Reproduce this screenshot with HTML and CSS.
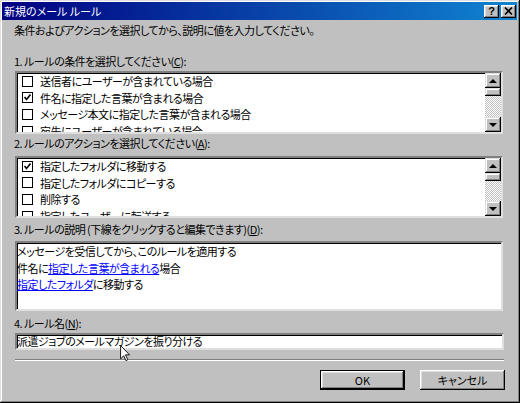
FILE: index.html
```html
<!DOCTYPE html>
<html lang="ja">
<head>
    <meta charset="UTF-8">
    <title>新規のメール ルール</title>
    <link rel="stylesheet" href="styles.css">
</head>
<body>
<div class="window">
    <div class="titlebar">
        <span class="title">新規のメール ルール</span>
        <div class="title-buttons">
            <span class="tbtn">?</span>
            <span class="tbtn">
                <svg width="9" height="8" viewBox="0 0 9 8"><path d="M1 0.5 L8 7.5 M8 0.5 L1 7.5" stroke="#000" stroke-width="1.6"/></svg>
            </span>
        </div>
    </div>

    <div class="content">
        <div class="intro">条件およびアクションを選択してから、説明に値を入力してください。</div>

        <div class="label label-1">1. ルールの条件を選択してください(<u>C</u>):</div>
        <div class="listbox lb-1">
            <ul class="items">
                <li><span class="check"></span>送信者にユーザーが含まれている場合</li>
                <li><span class="check checked"><svg width="9" height="9" viewBox="0 0 9 9"><path d="M1.5 4 L3.5 6.5 L7.5 1.5" fill="none" stroke="#000" stroke-width="1.6"/></svg></span>件名に指定した言葉が含まれる場合</li>
                <li><span class="check"></span>メッセージ本文に指定した言葉が含まれる場合</li>
                <li><span class="check"></span>宛先にユーザーが含まれている場合</li>
            </ul>
            <div class="scrollbar">
                <div class="sb-btn"><span class="arrow-up"></span></div>
                <div class="sb-thumb"></div>
                <div class="sb-track"></div>
                <div class="sb-btn"><span class="arrow-down"></span></div>
            </div>
        </div>

        <div class="label label-2">2. ルールのアクションを選択してください(<u>A</u>):</div>
        <div class="listbox lb-2">
            <ul class="items">
                <li><span class="check checked"><svg width="9" height="9" viewBox="0 0 9 9"><path d="M1.5 4 L3.5 6.5 L7.5 1.5" fill="none" stroke="#000" stroke-width="1.6"/></svg></span>指定したフォルダに移動する</li>
                <li><span class="check"></span>指定したフォルダにコピーする</li>
                <li><span class="check"></span>削除する</li>
                <li><span class="check"></span>指定したユーザーに転送する</li>
            </ul>
            <div class="scrollbar">
                <div class="sb-btn"><span class="arrow-up"></span></div>
                <div class="sb-thumb"></div>
                <div class="sb-track"></div>
                <div class="sb-btn"><span class="arrow-down"></span></div>
            </div>
        </div>

        <div class="label label-3">3. ルールの説明 (下線をクリックすると編集できます)(<u>D</u>):</div>
        <div class="description">
            <div>メッセージを受信してから、このルールを適用する</div>
            <div>件名に<a href="#">指定した言葉が含まれる</a>場合</div>
            <div><a href="#">指定したフォルダ</a>に移動する</div>
        </div>

        <div class="label label-4">4. ルール名(<u>N</u>):</div>
        <div class="textbox">派遣ジョブのメールマガジンを振り分ける</div>

        <div class="separator"></div>

        <div class="buttons">
            <span class="button default">OK</span>
            <span class="button">キャンセル</span>
        </div>
    </div>

    <!-- mouse pointer over the rule name -->
    <svg class="cursor" width="11" height="17" viewBox="0 0 12 19">
        <path d="M0.5 0.5 L0.5 15.5 L4 12 L6.5 17.5 L8.5 16.5 L6 11 L10.5 11 Z" fill="#fff" stroke="#000" stroke-width="1"/>
    </svg>
</div>
</body>
</html>
```

FILE: styles.css
```css
* {
    box-sizing: border-box;
}

body {
    margin: 0;
    background: #c0c0c0;
    font-family: "Noto Sans CJK JP", sans-serif;
    font-size: 11px;
    font-feature-settings: "palt";
    letter-spacing: -0.5px;
    color: #000;
}

.window {
    position: relative;
    width: 520px;
    height: 403px;
    padding: 2px 3px 0 2px;
    background: #c0c0c0;
    box-shadow: inset -1px -1px #000, inset 1px 1px #dfdfdf,
                inset -2px -2px #808080, inset 2px 2px #fff;
}

.titlebar {
    height: 18px;
    display: flex;
    align-items: center;
    justify-content: space-between;
    padding: 0 1px 0 2px;
    background: linear-gradient(to right, #000080, #1084d0);
    color: #fff;
}

.title {
    font-size: 11px;
    line-height: 18px;
    letter-spacing: 0;
}

.title-buttons {
    display: flex;
    gap: 2px;
}

.tbtn {
    width: 15px;
    height: 13px;
    display: flex;
    align-items: center;
    justify-content: center;
    background: #c0c0c0;
    color: #000;
    font-family: "Liberation Sans", sans-serif;
    font-weight: bold;
    font-size: 11px;
    line-height: 13px;
    letter-spacing: 0;
    box-shadow: inset -1px -1px #000, inset 1px 1px #fff,
                inset -2px -2px #808080, inset 2px 2px #dfdfdf;
}

.content {
    display: flex;
    flex-direction: column;
    padding: 2px 14px 0 12px;
}

.intro,
.label {
    line-height: 17px;
    height: 17px;
    white-space: nowrap;
}

.label-1 { margin-top: 14px; }
.label-2 { margin-top: 1px; }
.label-3 { margin-top: 3px; }
.label-4 { margin-top: 4px; }

.listbox,
.description,
.textbox {
    margin-left: 1px;
    background: #fff;
    border-style: solid;
    border-width: 2px;
    border-color: #808080 #dfdfdf #dfdfdf #808080;
    box-shadow: inset 1px 1px #000;
    overflow: hidden;
}

.listbox {
    display: flex;
    margin-top: 1px;
}

.lb-1 { height: 63px; }
.lb-2 { height: 62px; margin-top: 4px; }

.items {
    flex: 1;
    list-style: none;
    margin: 0;
    padding: 0;
    overflow: hidden;
}

.items li {
    display: flex;
    align-items: center;
    height: 16.67px;
    line-height: 16.67px;
    white-space: nowrap;
    padding-left: 5px;
}

.check {
    width: 11px;
    height: 11px;
    flex: none;
    margin-right: 7px;
    border: 1px solid #000;
    display: flex;
    align-items: center;
    justify-content: center;
    background: #fff;
}

.scrollbar {
    width: 16px;
    flex: none;
    display: flex;
    flex-direction: column;
}

.sb-btn,
.sb-thumb {
    background: #c0c0c0;
    box-shadow: inset -1px -1px #000, inset 1px 1px #dfdfdf,
                inset -2px -2px #808080, inset 2px 2px #fff;
}

.sb-btn {
    height: 15px;
    display: flex;
    align-items: center;
    justify-content: center;
}

.sb-thumb {
    height: 8px;
}

.sb-track {
    flex: 1;
    background: repeating-conic-gradient(#c0c0c0 0 25%, #fff 0 50%) 0 0 / 2px 2px;
}

.arrow-up {
    width: 0;
    height: 0;
    border-left: 4px solid transparent;
    border-right: 4px solid transparent;
    border-bottom: 4px solid #000;
}

.arrow-down {
    width: 0;
    height: 0;
    border-left: 4px solid transparent;
    border-right: 4px solid transparent;
    border-top: 4px solid #000;
}

.description {
    height: 70px;
    margin-top: 3px;
}

.description div {
    line-height: 16.67px;
    white-space: nowrap;
}

.description a {
    color: #0000ff;
    text-decoration: underline;
}

.textbox {
    height: 17px;
    margin-top: 1px;
    margin-right: -1px;
    line-height: 13px;
    white-space: nowrap;
}

.separator {
    height: 2px;
    margin-top: 9px;
    margin-left: 1px;
    margin-right: -1px;
    border-top: 1px solid #808080;
    border-bottom: 1px solid #fff;
}

.buttons {
    display: flex;
    justify-content: flex-end;
    gap: 15px;
    margin-top: 9px;
    margin-right: -2px;
}

.button {
    width: 85px;
    height: 20px;
    display: flex;
    align-items: center;
    justify-content: center;
    background: #c0c0c0;
    letter-spacing: 0;
    box-shadow: inset -1px -1px #000, inset 1px 1px #fff,
                inset -2px -2px #808080, inset 2px 2px #dfdfdf;
}

.button.default {
    box-shadow: inset 0 0 0 1px #000, inset -2px -2px #000, inset 2px 2px #fff,
                inset -3px -3px #808080, inset 3px 3px #dfdfdf;
}

.cursor {
    position: absolute;
    left: 120px;
    top: 345px;
}
```
